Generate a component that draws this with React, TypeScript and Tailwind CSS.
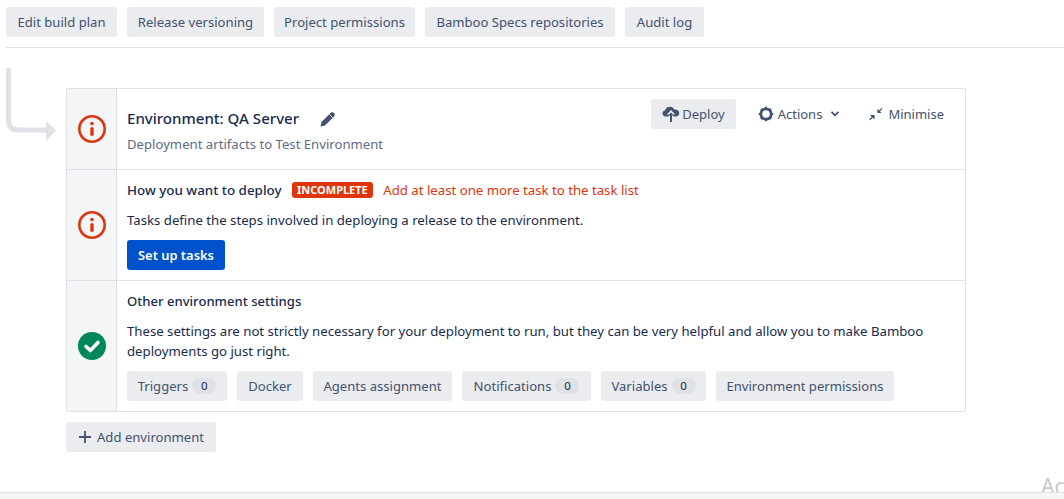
import React from "react";

const Btn = ({ children, className = "" }: { children: React.ReactNode; className?: string }) => (
  <div className={`h-[30px] flex items-center justify-center rounded-[3px] bg-[#ebecf0] text-[#42526e] text-[13.100px] whitespace-nowrap ${className}`}>{children}</div>
);

const Badge = ({ n }: { n: string }) => (
  <span className="ml-[4px] w-[24px] h-[16px] rounded-full bg-[#dfe1e6] text-[#172b4d] text-[11.500px] flex items-center justify-center leading-none">{n}</span>
);

const Info = () => (
  <svg width="28" height="28" viewBox="0 0 28 28" className="shrink-0">
    <circle cx="14" cy="14" r="12.700" fill="none" stroke="#de350b" strokeWidth="2.600" />
    <circle cx="14" cy="8.600" r="1.800" fill="#de350b" />
    <rect x="12.300" y="12" width="3.400" height="9" rx="1.700" fill="#de350b" />
  </svg>
);

const Cell = ({ children }: { children: React.ReactNode }) => (
  <div className="w-[50px] shrink-0 bg-[#f4f5f7] border-r border-[#dfe1e6] flex items-center justify-center pl-[1px]">{children}</div>
);

export default function App() {
  return (
    <div className="relative h-[499px] w-[1064px] overflow-hidden bg-white text-[#172b4d] text-[13.200px] leading-[20px]" style={{ fontFamily: '"Noto Sans", "Open Sans", sans-serif' }}>
      <div className="h-[48px] ml-[6px] pt-[7px] flex gap-[10px] border-b border-[#dfe1e6]">
        <Btn className="w-[111px]">Edit build plan</Btn>
        <Btn className="w-[137px]">Release versioning</Btn>
        <Btn className="w-[141px]">Project permissions</Btn>
        <Btn className="w-[190px]">Bamboo Specs repositories</Btn>
        <Btn className="w-[79px]">Audit log</Btn>
      </div>

      <svg className="absolute left-[6px] top-[68px]" width="52" height="76" viewBox="0 0 52 76">
        <path d="M2.500 0V52Q2.500 62 12.500 62H40" fill="none" stroke="#dfe1e6" strokeWidth="5" />
        <path d="M40 53L50 62.500L40 73Z" fill="#dfe1e6" />
      </svg>

      <div className="ml-[66px] mt-[40px] w-[900px] border border-[#dfe1e6] rounded-[2px]">
        <div className="flex h-[81px] border-b border-[#dfe1e6]">
          <Cell><Info /></Cell>
          <div className="flex-1 relative pl-[10px] pt-[18px]">
            <div className="flex items-center h-[22px]">
              <span className="text-[15.050px] font-medium leading-[22px]">Environment: QA Server</span>
              <svg className="ml-[21px] mt-[2px]" width="15" height="15" viewBox="0 0 15 15">
                <path d="M0.500 14.500L1.500 10L10.500 1C11.500 0 13 0 14 1C15 2 15 3.500 14 4.500L5 13.500Z" fill="#42526e" />
                <path d="M9.500 2.500L12.500 5.500" stroke="#fff" strokeWidth="0.800" />
              </svg>
            </div>
            <div className="text-[#5e6c84] text-[13.150px] mt-[5px]">Deployment artifacts to Test Environment</div>
            <div className="absolute right-[10px] top-[10px] flex items-center text-[#42526e] text-[13px]">
              <div className="h-[30px] flex items-center px-[11px] rounded-[3px] bg-[#ebecf0] gap-[2px]">
                <svg width="18" height="16" viewBox="0 0 18 16">
                  <path d="M4 10.500C1.500 10.500 0.500 8.800 0.500 7.300C0.500 5.800 1.500 4.700 3 4.500C3.500 2 5.500 0.700 7.800 0.700C10 0.700 11.500 1.800 12.300 3.500C15 3.300 17.300 4.800 17.300 7.300C17.300 9.200 15.800 10.500 14 10.500H11.200V8.500H13.300L9 4L4.700 8.500H6.800V10.500Z" fill="#42526e" />
                  <path d="M9 6.500L12 9.500H10V16H8V9.500H6Z" fill="#42526e" />
                </svg>
                Deploy
              </div>
              <div className="ml-[11px] h-[30px] flex items-center px-[11px] gap-[4px]">
                <svg width="16" height="16" viewBox="0 0 16 16">
                  <circle cx="8" cy="8" r="5.200" fill="none" stroke="#42526e" strokeWidth="2.800" />
                  <path d="M8 0.800V2.500M8 13.500V15.200M0.800 8H2.500M13.500 8H15.200M2.900 2.900L4.100 4.100M11.900 11.900L13.100 13.100M2.900 13.100L4.100 11.900M11.900 4.100L13.100 2.900" stroke="#42526e" strokeWidth="1.800" />
                </svg>
                Actions
                <svg className="ml-[4px]" width="10" height="8" viewBox="0 0 10 8">
                  <path d="M1.500 1.800L5 5.300L8.500 1.800" fill="none" stroke="#42526e" strokeWidth="1.800" />
                </svg>
              </div>
              <div className="ml-[7px] h-[30px] flex items-center px-[11px] gap-[5px]">
                <svg width="14" height="14" viewBox="0 0 15 14">
                  <path d="M14 1L10 5M0.800 13.200L5 9" stroke="#42526e" strokeWidth="1.400" />
                  <path d="M9 1.500V6H13.500ZM1 8H6V13Z" fill="#42526e" />
                </svg>
                Minimise
              </div>
            </div>
          </div>
        </div>

        <div className="flex h-[111px] border-b border-[#dfe1e6]">
          <Cell><Info /></Cell>
          <div className="flex-1 pl-[10px] pt-[10px]">
            <div className="flex items-center h-[20px]">
              <span className="text-[13.400px] font-medium">How you want to deploy</span>
              <span className="ml-[10px] h-[16px] px-[5.500px] rounded-[3px] bg-[#de350b] text-white text-[11px] font-bold leading-[16px]">INCOMPLETE</span>
              <span className="ml-[10px] text-[#de350b]">Add at least one more task to the task list</span>
            </div>
            <div className="mt-[10px]">Tasks define the steps involved in deploying a release to the environment.</div>
            <div className="mt-[10px] h-[30px] w-fit px-[11px] flex items-center rounded-[3px] bg-[#0052cc] text-white text-[12.900px] font-semibold">Set up tasks</div>
          </div>
        </div>

        <div className="flex h-[130px]">
          <Cell>
            <svg width="28" height="28" viewBox="0 0 28 28" className="shrink-0">
              <circle cx="14" cy="14" r="14" fill="#00875a" />
              <path d="M8 14.500L12.300 18.500L20 10.500" fill="none" stroke="#fff" strokeWidth="3.600" strokeLinecap="round" strokeLinejoin="round" />
            </svg>
          </Cell>
          <div className="flex-1 pl-[10px] pt-[10px]">
            <div className="h-[20px] text-[13.100px] font-medium">Other environment settings</div>
            <div className="mt-[10px]">These settings are not strictly necessary for your deployment to run, but they can be very helpful and allow you to make Bamboo deployments go just right.</div>
            <div className="mt-[10px] flex gap-[10px]">
              <Btn className="w-[100px]">Triggers<Badge n="0" /></Btn>
              <Btn className="w-[66px]">Docker</Btn>
              <Btn className="w-[139px]">Agents assignment</Btn>
              <Btn className="w-[129px]">Notifications<Badge n="0" /></Btn>
              <Btn className="w-[105px]">Variables<Badge n="0" /></Btn>
              <Btn className="w-[178px]">Environment permissions</Btn>
            </div>
          </div>
        </div>
      </div>

      <div className="ml-[66px] mt-[10px] w-[150px]">
        <Btn className="gap-[5px]">
          <svg width="14" height="14" viewBox="0 0 14 14" className="shrink-0">
            <path d="M7 1V13M1 7H13" stroke="#42526e" strokeWidth="1.800" />
          </svg>
          Add environment
        </Btn>
      </div>

      <div className="mt-[40px] h-[20px] bg-[#f4f5f7] border-t border-[#dfe1e6]" />
      <div className="absolute left-[1041px] top-[472px] h-[20px] overflow-hidden text-[21px] leading-[28px] text-[#c8c8c8]">Ac</div>
    </div>
  );
}
